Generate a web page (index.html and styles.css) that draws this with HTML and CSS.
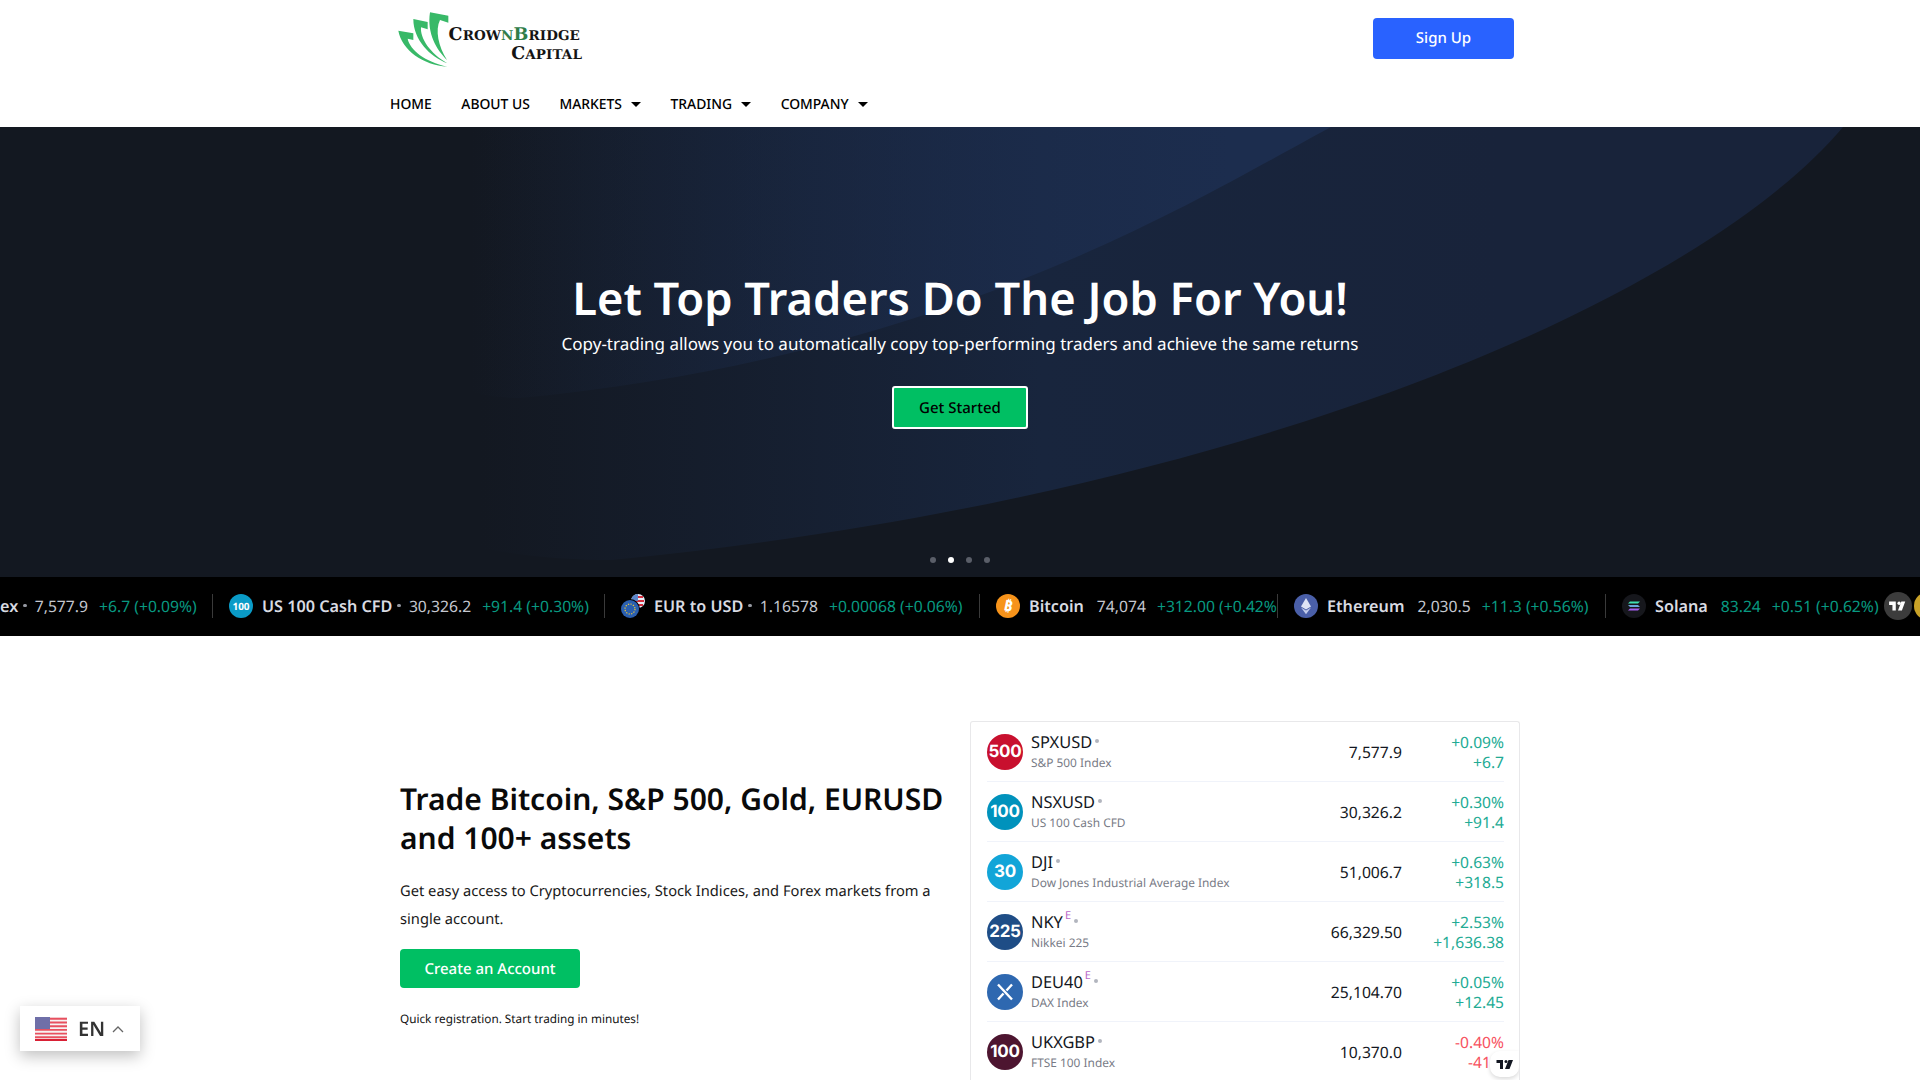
FILE: index.html
```html
<!DOCTYPE html>
<html lang="en">
<head>
<meta charset="utf-8">
<title>CrownBridge Capital</title>
<link rel="stylesheet" href="styles.css">
</head>
<body>
<header class="site-header">
  <div class="header-top">
    <a class="logo">
      <svg class="logo-mark" viewBox="0 0 630 225" width="210" height="75" aria-hidden="true">
        <path fill="#38b968" d="M135 37 L190 47 L190 68 L165 60 C150 90 160 140 186 180 C155 150 125 100 135 37 Z"/>
        <path fill="#38b968" d="M85 57 L128 66 L128 88 L108 82 C105 115 135 160 187 190 C135 170 85 120 85 57 Z"/>
        <path fill="#38b968" d="M40 92 L85 100 L85 120 L68 116 C75 150 120 185 187 200 C115 195 50 150 40 92 Z"/>
      </svg>
      <span class="logo-text">
        <span class="logo-line"><b class="big">C</b>ROW<i>N</i><b class="big g">B</b>RIDGE</span>
        <span class="logo-line second"><b class="big">C</b>APITAL</span>
      </span>
    </a>
    <a class="signup">Sign Up</a>
  </div>
  <nav class="nav">
    <a>HOME</a><a>ABOUT US</a><a class="caret">MARKETS</a><a class="caret">TRADING</a><a class="caret">COMPANY</a>
  </nav>
</header>

<section class="hero">
  <svg class="hero-bg" viewBox="0 0 1920 450" aria-hidden="true">
    <defs>
      <linearGradient id="bandA" gradientUnits="userSpaceOnUse" x1="480" y1="0" x2="1500" y2="0">
        <stop offset="0" stop-color="#18253d" stop-opacity="0"/>
        <stop offset="0.55" stop-color="#18253d"/>
        <stop offset="1" stop-color="#18233a"/>
      </linearGradient>
      <linearGradient id="bandB" gradientUnits="userSpaceOnUse" x1="470" y1="0" x2="1230" y2="0">
        <stop offset="0" stop-color="#1c2d4e" stop-opacity="0"/>
        <stop offset="1" stop-color="#1c2d4e"/>
      </linearGradient>
    </defs>
    <path fill="url(#bandA)" d="M1843 0 C1700 170 1250 370 612 433 C540 433 480 425 400 400 L400 0 Z"/>
    <path fill="url(#bandB)" d="M1331 0 C1200 70 950 230 520 271 C480 271 440 260 400 230 L400 0 Z"/>
  </svg>
  <div class="hero-copy">
    <h1>Let Top Traders Do The Job For You!</h1>
    <p>Copy-trading allows you to automatically copy top-performing traders and achieve the same returns</p>
    <a class="hero-btn">Get Started</a>
  </div>
  <div class="dots"><i></i><i class="on"></i><i></i><i></i></div>
</section>

<section class="ticker">
  <div class="tick"><span class="t-name">ex</span><span class="t-dot"></span><span class="t-price">7,577.9</span><span class="t-chg">+6.7 (+0.09%)</span></div>
  <div class="tick"><span class="t-ico c100">100</span><span class="t-name">US 100 Cash CFD</span><span class="t-dot"></span><span class="t-price">30,326.2</span><span class="t-chg">+91.4 (+0.30%)</span></div>
  <div class="tick"><svg class="t-ico-svg" viewBox="0 0 24 24" aria-hidden="true"><circle cx="17" cy="7" r="7" fill="#e8eef8"/><path d="M12 3h10M11 7h12M12 11h10" stroke="#d32f3f" stroke-width="1.800"/><path d="M10 7a7 7 0 0 1 7-7v7z" fill="#5c86c9"/><circle cx="9" cy="15" r="10" fill="#000"/><circle cx="9" cy="15" r="9" fill="#2a5fb0"/><circle cx="9" cy="15" r="5" fill="none" stroke="#e9c63a" stroke-width="1.200" stroke-dasharray="1.300 1.300"/></svg><span class="t-name">EUR to USD</span><span class="t-dot"></span><span class="t-price">1.16578</span><span class="t-chg">+0.00068 (+0.06%)</span></div>
  <div class="tick"><span class="t-ico btc"><span class="btc-glyph">₿</span></span><span class="t-name">Bitcoin</span><span class="t-price">74,074</span><span class="t-chg">+312.00 (+0.42%)</span></div>
  <div class="tick"><span class="t-ico eth"><svg viewBox="0 0 24 24" width="24" height="24" aria-hidden="true"><path fill="#dfe4f5" d="M12 4l5 8.400-5 3-5-3z"/><path fill="#c2cbea" d="M12 16.600l5-3-5 6.600-5-6.600z"/></svg></span><span class="t-name">Ethereum</span><span class="t-price">2,030.5</span><span class="t-chg">+11.3 (+0.56%)</span></div>
  <div class="tick"><span class="t-ico sol"><svg viewBox="0 0 24 24" width="24" height="24" aria-hidden="true"><path d="M8 7.500h10l-2 2H6z" fill="#3fe0b0"/><path d="M6 11h10l2 2H8z" fill="#6aa5dc"/><path d="M8 14.500h10l-2 2H6z" fill="#a65ef0"/></svg></span><span class="t-name">Solana</span><span class="t-price teal">83.24</span><span class="t-chg">+0.51 (+0.62%)</span></div>
  <span class="tv-badge"><svg viewBox="0 0 36 28" width="20" height="16" aria-hidden="true"><path fill="#fff" d="M14 6H2v6h6v10h6zM24 6h7l-6 16h-7z"/><circle cx="20" cy="9" r="3" fill="#fff"/></svg></span>
  <span class="gold-badge"></span>
</section>

<main class="assets">
  <div class="assets-copy">
    <h2>Trade Bitcoin, S&amp;P 500, Gold, EURUSD and 100+ assets</h2>
    <p class="lead">Get easy access to Cryptocurrencies, Stock Indices, and Forex markets from a single account.</p>
    <a class="cta">Create an Account</a>
    <p class="note">Quick registration. Start trading in minutes!</p>
  </div>
  <div class="quotes">
    <div class="q-row"><span class="q-ico i500">500</span><div class="q-name"><div class="q-sym">SPXUSD<em></em></div><div class="q-desc">S&amp;P 500 Index</div></div><div class="q-price">7,577.9</div><div class="q-chg"><span>+0.09%</span><span>+6.7</span></div></div>
    <div class="q-row"><span class="q-ico i100">100</span><div class="q-name"><div class="q-sym">NSXUSD<em></em></div><div class="q-desc">US 100 Cash CFD</div></div><div class="q-price">30,326.2</div><div class="q-chg"><span>+0.30%</span><span>+91.4</span></div></div>
    <div class="q-row"><span class="q-ico i30">30</span><div class="q-name"><div class="q-sym">DJI<em></em></div><div class="q-desc">Dow Jones Industrial Average Index</div></div><div class="q-price">51,006.7</div><div class="q-chg"><span>+0.63%</span><span>+318.5</span></div></div>
    <div class="q-row"><span class="q-ico i225">225</span><div class="q-name"><div class="q-sym">NKY<sup>E</sup><em></em></div><div class="q-desc">Nikkei 225</div></div><div class="q-price">66,329.50</div><div class="q-chg"><span>+2.53%</span><span>+1,636.38</span></div></div>
    <div class="q-row"><span class="q-ico idax"><svg viewBox="0 0 36 36" width="36" height="36" aria-hidden="true"><path d="M11 10.500l14 15M25 10.500l-5.500 6M16.500 19.500l-5.500 6" fill="none" stroke="#fff" stroke-width="2.400"/></svg></span><div class="q-name"><div class="q-sym">DEU40<sup>E</sup><em></em></div><div class="q-desc">DAX Index</div></div><div class="q-price">25,104.70</div><div class="q-chg"><span>+0.05%</span><span>+12.45</span></div></div>
    <div class="q-row"><span class="q-ico iuk">100</span><div class="q-name"><div class="q-sym">UKXGBP<em></em></div><div class="q-desc">FTSE 100 Index</div></div><div class="q-price">10,370.0</div><div class="q-chg neg"><span>-0.40%</span><span>-41.0</span></div></div>
    <span class="tv-corner"><svg viewBox="0 0 36 22" width="18" height="11" aria-hidden="true"><path fill="#131722" d="M14 2H1v6h7v12h6zM25 2h9l-7 18h-9z"/><circle cx="20" cy="5" r="3" fill="#131722"/></svg></span>
  </div>
</main>

<div class="lang">
  <svg class="flag" viewBox="0 0 32 24" width="32" height="24" aria-hidden="true">
    <rect width="32" height="24" fill="#f7f2f2"/>
    <path d="M0 1.800h32M0 5.500h32M0 9.200h32M0 12.900h32M0 16.600h32M0 20.300h32" stroke="#e8505f" stroke-width="1.900"/>
    <rect y="22" width="32" height="2" fill="#d92035"/>
    <rect width="15" height="12" fill="#6f6fa8"/>
  </svg>
  <span>EN</span>
  <svg class="chev" viewBox="0 0 12 8" width="12" height="8" aria-hidden="true"><path d="M1 7l5-5 5 5" fill="none" stroke="#666" stroke-width="1.300"/></svg>
</div>
</body>
</html>
```
FILE: styles.css
```css
* { box-sizing: border-box; }
html, body { margin: 0; padding: 0; }
body { font-family: "Noto Sans", "Open Sans", sans-serif; background: #fff; color: #000; height: 1080px; overflow: hidden; text-rendering: geometricPrecision; }
a { text-decoration: none; color: inherit; }

.site-header { height: 127px; width: 1140px; margin: 0 auto; display: flex; flex-direction: column; }
.header-top { height: 83px; display: flex; justify-content: space-between; align-items: flex-start; padding-right: 16px; }
.logo { display: block; margin-left: -5px; width: 210px; height: 75px; position: relative; }
.logo-mark { display: block; }
.logo-text { position: absolute; left: 40px; top: 26px; width: 155px; font-family: "DejaVu Serif", serif; font-weight: 700; font-size: 13.500px; line-height: 18px; color: #141414; letter-spacing: .1px; white-space: nowrap; display: flex; flex-direction: column; align-items: flex-end; }
.logo-line { display: block; }
.logo-line i { font-style: normal; color: #2f7d4a; }
.logo-line .big { font-size: 17.500px; }
.logo-line .g { color: #2f7d4a; }
.logo-line.second { margin-right: -2px; }
.signup { margin-top: 18px; width: 141px; height: 41px; background: #2962ff; color: #fff; border-radius: 4px; font-size: 15px; font-weight: 500; display: flex; align-items: center; justify-content: center; padding-bottom: 1px; }
.nav { display: flex; gap: 29.500px; height: 42px; align-items: center; font-size: 13.900px; font-weight: 500; color: #000; }
.caret { display: flex; align-items: center; gap: 9px; }
.caret::after { content: ""; border: 5px solid transparent; border-top-color: #000; border-bottom: 0; }

.hero { position: relative; height: 450px; background: #131821; color: #fff; display: flex; flex-direction: column; align-items: center; overflow: hidden; }
.hero-bg { position: absolute; inset: 0; width: 100%; height: 100%; }
.hero-copy { position: relative; display: flex; flex-direction: column; align-items: center; padding-top: 143px; }
.hero-copy h1 { margin: 0; font-size: 45.300px; line-height: 58px; font-weight: 600; white-space: nowrap; }
.hero-copy p { margin: 3px 0 0; font-size: 17px; line-height: 26px; }
.hero-btn { margin-top: 29px; width: 136px; height: 43px; background: #00bf63; border: 2px solid #fff; border-radius: 3px; color: #000; font-size: 15px; font-weight: 500; display: flex; align-items: center; justify-content: center; }
.dots { position: absolute; bottom: 14px; left: 0; right: 0; display: flex; justify-content: center; gap: 12px; }
.dots i { width: 6px; height: 6px; border-radius: 50%; background: #5a5e68; }
.dots .on { background: #fff; }

.ticker { height: 59px; padding-bottom: 2px; background: #000; display: flex; align-items: center; position: relative; overflow: hidden; color: #d1d4dc; white-space: nowrap; font-size: 15.700px; }
.tick { display: flex; align-items: center; height: 24px; padding-left: 16px; border-right: 1px solid #3a3a3a; flex: none; overflow: hidden; }
.tick:nth-child(1) { padding-left: 0; width: 213px; }
.tick:nth-child(2) { width: 392px; }
.tick:nth-child(3) { width: 375px; }
.tick:nth-child(4) { width: 298px; }
.tick:nth-child(5) { width: 328px; }
.tick:nth-child(6) { width: 276px; border-right: 0; }
.t-ico { width: 24px; height: 24px; border-radius: 50%; flex: none; margin-right: 9px; display: flex; align-items: center; justify-content: center; color: #fff; font-size: 10px; font-weight: 700; }
.t-ico-svg { width: 24px; height: 24px; flex: none; margin-right: 9px; }
.c100 { background: #0a9bc7; }
.btc { background: #f7931a; font-size: 15px; }
.btc-glyph { display: block; transform: rotate(12deg); }
.eth { background: #4a5fa8; }
.sol { background: #16171c; }
.t-name { font-weight: 600; color: #d9dbe2; font-size: 16.200px; }
.t-dot { width: 3.500px; height: 3.500px; border-radius: 50%; background: #9598a1; margin-left: 5px; }
.t-dot + .t-price { margin-left: 8px; }
.t-price { margin-left: 13px; color: #c5c8d0; }
.t-price.teal { color: #089981; }
.t-chg { margin-left: 11px; color: #089981; }
.tv-badge { position: absolute; left: 1884px; top: 15px; width: 28px; height: 28px; border-radius: 50%; background: #3c3c3c; display: flex; align-items: center; justify-content: center; }
.gold-badge { position: absolute; left: 1914px; top: 15px; width: 28px; height: 28px; border-radius: 50%; background: #c9a227; }

.assets { display: flex; width: 1120px; margin-left: 400px; padding-top: 85px; height: 444px; align-items: flex-start; }
.assets-copy { width: 570px; padding-top: 58px; flex: none; }
.assets-copy h2 { margin: 0; font-size: 30px; line-height: 39px; font-weight: 600; width: 560px; color: #0a0a0a; }
.lead { margin: 20px 0 0; font-size: 14.700px; line-height: 28px; color: #1a1a1a; width: 550px; }
.cta { margin-top: 16px; width: 180px; height: 39px; display: flex; align-items: center; justify-content: center; background: #00bf63; color: #fff; border-radius: 4px; font-size: 15px; font-weight: 500; }
.note { margin: 22px 0 0; font-size: 11.750px; line-height: 18px; color: #111; }

.quotes { flex: 1; border: 1px solid #e8e8ea; border-bottom: 0; border-radius: 3px 3px 0 0; padding: 0 15px 0 16px; height: 360px; overflow: hidden; position: relative; }
.q-row { height: 60px; display: flex; align-items: center; border-bottom: 1px solid #f0f3fa; }
.q-ico { width: 36px; height: 36px; border-radius: 50%; flex: none; margin-right: 8px; color: #fff; font-size: 17px; font-weight: 700; font-family: "Inter", "Liberation Sans", sans-serif; letter-spacing: -.3px; display: flex; align-items: center; justify-content: center; }
.i500 { background: #c8102e; }
.i100 { background: #0092bc; }
.i30 { background: #12a5d8; }
.i225 { background: #1e4d86; }
.idax { background: #2e68b0; }
.iuk { background: #4d1530; }
.q-name { flex: 1; min-width: 0; }
.q-sym { font-size: 16.400px; line-height: 20px; color: #131722; display: flex; align-items: flex-start; }
.q-sym sup { font-size: 11px; line-height: 12px; color: #ba68c8; margin: -2px 0 0 2px; }
.q-sym em { width: 4px; height: 4px; border-radius: 50%; background: #b2b5be; margin: 7px 0 0 3px; }
.q-desc { font-size: 11.900px; line-height: 18px; color: #787b86; margin-top: 2px; }
.q-price { font-size: 15.700px; color: #131722; text-align: right; margin-right: 1px; }
.q-chg { width: 101px; flex: none; display: flex; flex-direction: column; align-items: flex-end; color: #22ab94; font-size: 15.600px; line-height: 20px; }
.q-chg.neg { color: #f7525f; }
.tv-corner { position: absolute; right: 0; bottom: 4px; width: 29px; height: 26px; background: #fff; border-radius: 10px 0 10px 10px; box-shadow: 0 2px 4px rgba(0,0,0,.15); display: flex; align-items: center; justify-content: center; }

.lang { position: fixed; left: 20px; bottom: 29px; width: 120px; height: 45px; background: #fff; box-shadow: 0 5px 15px rgba(0,0,0,.25); display: flex; align-items: center; padding-left: 15px; font-size: 20px; font-weight: 600; color: #333; }
.lang span { margin-left: 11px; }
.chev { margin-left: 7px; }
```
